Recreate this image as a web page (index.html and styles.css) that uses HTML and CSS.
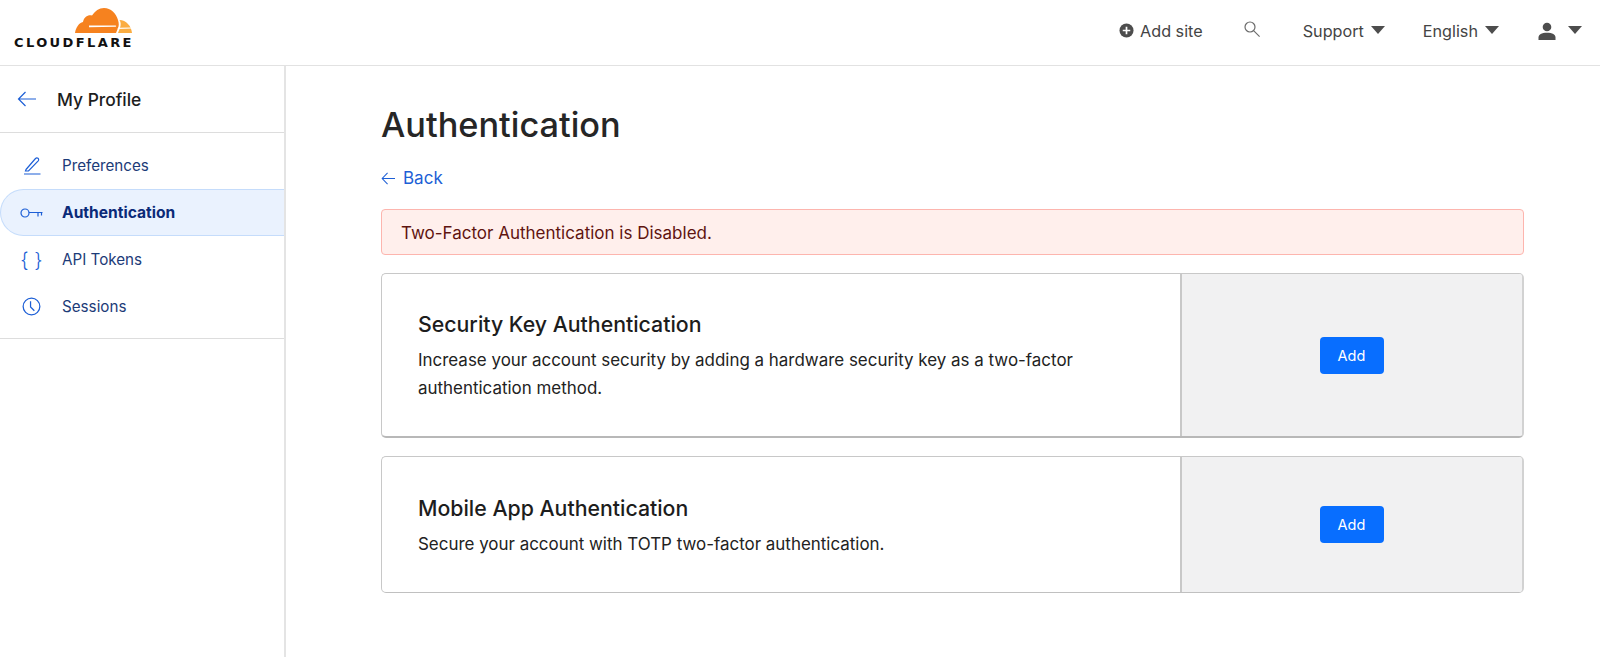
FILE: index.html
```html
<!DOCTYPE html>
<html lang="en">
<head>
<meta charset="utf-8">
<title>Authentication</title>
<link rel="stylesheet" href="styles.css">
</head>
<body>
<header class="topbar">
  <a class="logo">
    <svg class="logo-cloud" viewBox="0 0 58 26" width="58" height="26">
      <path fill="#f6821f" d="M0 25C1 19 4 15 8 14C9 9 13 6.500 17 7.500C20 3 24 0 29 0C36 0 41 5 43 12C44 15 44 18 43 20L41 25Z"/>
      <path fill="#fbad41" d="M44.500 12C51 12 56.500 18 57 25H43L45 20C46 17 46 14 44.500 12Z"/>
      <path fill="#fff" d="M14 17.600H40.500C41.500 17.800 41.500 18.600 40.500 18.800L14 19.200ZM43 19.800L57 19.600V20.600L42.700 21Z"/>
    </svg>
    <span class="logo-text">CLOUDFLARE</span>
  </a>
  <nav class="topnav">
    <a class="topitem add-site">
      <svg class="ico-plus" viewBox="0 0 16 16" width="15" height="15"><circle cx="8" cy="8" r="7.500" fill="#4d4d4d"/><path d="M8 4v8M4 8h8" stroke="#fff" stroke-width="1.800"/></svg>
      Add site
    </a>
    <a class="topitem search">
      <svg viewBox="0 0 18 18" width="18" height="18" fill="none" stroke="#6b6b6b" stroke-width="1.200"><circle cx="7" cy="7" r="5"/><path d="M10.600 10.600l6 6"/></svg>
    </a>
    <a class="topitem support">Support <span class="caret"></span></a>
    <a class="topitem english">English <span class="caret"></span></a>
    <a class="topitem user">
      <svg viewBox="0 0 18 18" width="18" height="18" fill="#4d4d4d"><circle cx="9" cy="5" r="4.300"/><path d="M0.500 18v-2.500c0-3 3-4.800 8.500-4.800s8.500 1.800 8.500 4.800V18z"/></svg>
      <span class="caret"></span>
    </a>
  </nav>
</header>
<div class="layout">
  <aside class="sidebar">
    <div class="side-head">
      <svg viewBox="0 0 20 16" width="20" height="16" fill="none" stroke="#1d5fd6" stroke-width="1.200"><path d="M19 8H1.500M8.500 1L1.500 8l7 7"/></svg>
      <span>My Profile</span>
    </div>
    <ul class="side-nav">
      <li class="side-item">
        <span class="side-ico"><svg viewBox="0 0 18 18" width="18" height="18" fill="none" stroke="#1d5fd6" stroke-width="1.200"><path d="M3 12.500L12.500 1.500c.8-.8 1.800-.8 2.500-.2s.9 1.700.2 2.500L5.500 14H2.500zM1 17h16.500"/></svg></span>
        Preferences
      </li>
      <li class="side-item active">
        <span class="side-ico"><svg viewBox="0 0 23 10" width="23" height="10" fill="none" stroke="#1d5fd6" stroke-width="1.200"><circle cx="5" cy="5" r="4"/><path d="M9 4.500h13.500M18 4.500v4M21.500 4.500v3"/></svg></span>
        Authentication
      </li>
      <li class="side-item">
        <span class="side-ico braces">{ }</span>
        API Tokens
      </li>
      <li class="side-item">
        <span class="side-ico"><svg viewBox="0 0 20 20" width="19" height="19" fill="none" stroke="#1d5fd6" stroke-width="1.300"><circle cx="10" cy="10" r="8.800"/><path d="M9 4.500v6l4 4"/></svg></span>
        Sessions
      </li>
    </ul>
  </aside>
  <main class="content">
    <h1 class="title">Authentication</h1>
    <a class="back"><svg viewBox="0 0 16 14" width="15" height="13" fill="none" stroke="#1d5fd6" stroke-width="1.100"><path d="M15 7H1.200M7 1L1.200 7 7 13"/></svg> Back</a>
    <div class="alert">Two-Factor Authentication is Disabled.</div>
    <section class="card card-key">
      <div class="card-body">
        <h2>Security Key Authentication</h2>
        <p>Increase your account security by adding a hardware security key as a two-factor authentication method.</p>
      </div>
      <div class="card-action"><button class="btn">Add</button></div>
    </section>
    <section class="card card-app">
      <div class="card-body">
        <h2>Mobile App Authentication</h2>
        <p>Secure your account with TOTP two-factor authentication.</p>
      </div>
      <div class="card-action"><button class="btn">Add</button></div>
    </section>
  </main>
</div>
</body>
</html>
```
FILE: styles.css
```css
* { box-sizing: border-box; }
html, body { height: 100%; }
body {
  margin: 0;
  background: #fff;
  font-family: Inter, "Liberation Sans", sans-serif;
  color: #222;
  overflow: hidden;
}
.topbar {
  height: 66px;
  border-bottom: 1px solid #e2e2e2;
  display: flex;
  justify-content: space-between;
  align-items: center;
  padding: 0 18px 0 14px;
}
.logo {
  display: flex;
  flex-direction: column;
  align-items: flex-end;
  width: 120px;
  margin-top: -8px;
  padding-right: 1px;
}
.logo-cloud { display: block; }
.logo-text {
  font-family: "DejaVu Sans", sans-serif;
  font-weight: 700;
  font-size: 13px;
  letter-spacing: 2.400px;
  line-height: 13px;
  color: #111;
  width: 119px;
  margin-top: 2px;
  white-space: nowrap;
}
.topnav {
  display: flex;
  align-items: center;
  font-size: 16.200px;
  color: #444;
  margin-top: -4px;
}
.topitem { display: flex; align-items: center; }
.ico-plus { margin-right: 6px; }
.add-site { margin-right: 40px; }
.search { margin-right: 42px; margin-top: -3px; }
.support { margin-right: 38px; gap: 7px; }
.english { margin-right: 39px; gap: 7px; }
.user { gap: 12px; }
.caret {
  display: inline-block;
  width: 0;
  height: 0;
  border-left: 7.500px solid transparent;
  border-right: 7.500px solid transparent;
  border-top: 8px solid #4d4d4d;
  margin-top: -2px;
}
.layout { display: flex; height: 591px; }
.sidebar {
  width: 286px;
  flex: none;
  border-right: 2px solid #e4e4e4;
}
.side-head {
  height: 67px;
  border-bottom: 1px solid #ddd;
  display: flex;
  align-items: center;
  gap: 20px;
  padding-left: 17px;
  font-size: 17.400px;
  font-weight: 500;
  color: #1d1d1d;
}
.side-nav {
  list-style: none;
  margin: 0;
  padding: 9px 0 10px;
  border-bottom: 1px solid #ddd;
  height: 206px;
}
.side-item {
  height: 47px;
  display: flex;
  align-items: center;
  font-size: 15.200px;
  color: #1c3b78;
  padding-left: 20px;
}
.side-ico {
  width: 23px;
  margin-right: 19px;
  display: flex;
  justify-content: center;
}
.braces {
  color: #1d5fd6;
  font-size: 20px;
  line-height: 1;
  white-space: nowrap;
  font-weight: 300;
}
.side-item.active {
  background: #eaf2fe;
  border: 1px solid #c5dcfb;
  border-right: 0;
  border-radius: 24px 0 0 24px;
  color: #0b2a78;
  font-weight: 700;
  font-size: 15.600px;
  padding-left: 19px;
}
.content {
  flex: 1;
  padding: 0 76px 0 95px;
  min-width: 0;
}
.title {
  margin: 37px 0 0;
  font-size: 34.300px;
  line-height: 44px;
  font-weight: 500;
  color: #262626;
}
.back {
  display: flex;
  align-items: center;
  gap: 7px;
  margin-top: 19px;
  font-size: 17px;
  line-height: 24px;
  color: #1d5fd6;
}
.alert {
  margin-top: 19px;
  height: 46px;
  border: 1px solid #fdb5ae;
  border-radius: 4px;
  background: #ffefec;
  color: #5f1410;
  font-size: 17px;
  display: flex;
  align-items: center;
  padding-left: 19px;
  padding-top: 1px;
}
.card {
  display: flex;
  border: 1px solid #c8c8c8;
  border-right: 2px solid #d2d2d2;
  border-radius: 5px;
  overflow: hidden;
}
.card-key {
  margin-top: 18px;
  height: 165px;
  border-bottom: 2px solid #b8b8b8;
}
.card-app {
  margin-top: 18px;
  height: 137px;
  border-bottom-color: #c0c0c0;
}
.card-body {
  flex: none;
  width: 798px;
  padding: 37px 36px 0;
}
.card-app .card-body { padding-top: 38px; }
.card-body h2 {
  margin: 0;
  font-size: 21.300px;
  line-height: 26px;
  font-weight: 500;
  color: #1d1d1d;
}
.card-body p {
  margin: 10px 0 0;
  font-size: 16.950px;
  line-height: 27.500px;
  color: #222;
  max-width: 680px;
}
.card-action {
  flex: 1;
  border-left: 2px solid #c8c8c8;
  background: #f1f1f2;
  display: flex;
  align-items: center;
  justify-content: center;
  padding-right: 1px;
}
.btn {
  width: 64px;
  height: 37px;
  border: 0;
  border-radius: 4px;
  background: #086eff;
  color: #fff;
  font-family: inherit;
  font-size: 14.500px;
  padding: 0;
}
```
